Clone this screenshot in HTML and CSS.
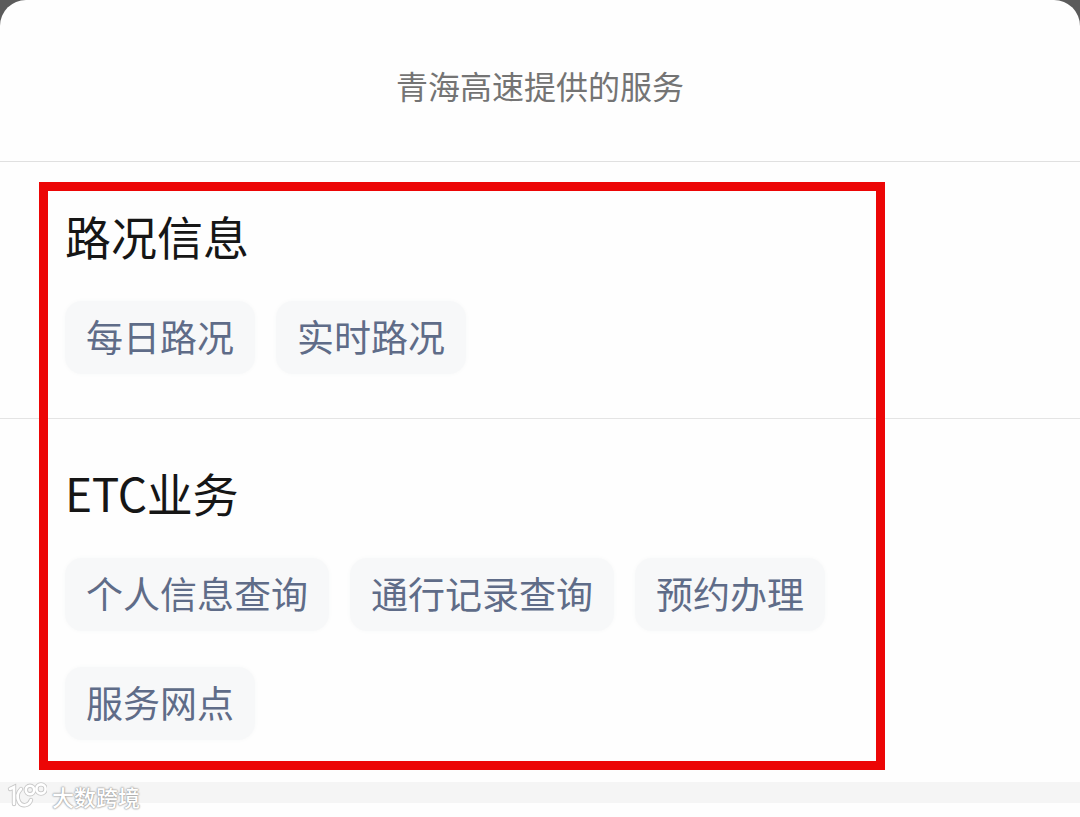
FILE: index.html
```html
<!DOCTYPE html>
<html lang="zh-CN">
<head>
<meta charset="utf-8">
<title>青海高速提供的服务</title>
<link rel="stylesheet" href="styles.css">
</head>
<body>

<div class="sheet">
  <div class="sheet-title">青海高速提供的服务</div>

  <div class="section section-road">
    <h2>路况信息</h2>
    <div class="tags">
      <a class="tag">每日路况</a>
      <a class="tag">实时路况</a>
    </div>
  </div>

  <div class="section section-etc">
    <h2>ETC业务</h2>
    <div class="tags">
      <a class="tag">个人信息查询</a>
      <a class="tag">通行记录查询</a>
      <a class="tag">预约办理</a>
      <a class="tag">服务网点</a>
    </div>
  </div>

  <div class="divider"></div>
</div>

<div class="highlight"></div>

<div class="watermark">
  <svg class="watermark-logo" width="40" height="30" viewBox="0 0 40 30">
    <g class="logo-shade">
      <path d="M3 8 L7 6 V23"/>
      <path d="M14 8 C10 12 10 17 12 21 C15 26 22 25 24 19"/>
      <circle cx="23" cy="9" r="4.2"/>
      <circle cx="34" cy="8" r="4.6"/>
    </g>
    <g class="logo-line">
      <path d="M3 8 L7 6 V23"/>
      <path d="M14 8 C10 12 10 17 12 21 C15 26 22 25 24 19"/>
      <circle cx="23" cy="9" r="4.2"/>
      <circle cx="34" cy="8" r="4.6"/>
    </g>
  </svg>
  <span>大数跨境</span>
</div>

</body>
</html>
```

FILE: styles.css
```css
body {
  margin: 0;
  height: 817px;
  overflow: hidden;
  background-color: #5b5b5b;
  font-family: "Noto Sans CJK SC", sans-serif;
}

.sheet {
  height: 817px;
  background-color: #fefefe;
  border-radius: 26px 26px 0 0;
}

.sheet-title {
  box-sizing: border-box;
  height: 162px;
  padding-top: 61px;
  border-bottom: 1px solid #e0e0e0;
  font-size: 32px;
  line-height: 48px;
  text-align: center;
  color: #747474;
}

.section {
  box-sizing: border-box;
  padding: 43px 66px 0 65px;
}

.section-road {
  height: 257px;
  border-bottom: 1px solid #e4e4e4;
}

.section-etc {
  height: 363px;
}

h2 {
  margin: 0 0 36px;
  font-size: 46px;
  font-weight: 400;
  line-height: 60px;
  color: #161616;
}

.section-etc h2 {
  letter-spacing: -0.3px;
}

.tags {
  display: flex;
  flex-wrap: wrap;
  gap: 36px 21px;
}

.tag {
  box-sizing: border-box;
  height: 73px;
  padding: 0 21px;
  border-radius: 17px;
  background-color: #f7f8f9;
  box-shadow: 0 0 5px #f8f9f9;
  font-size: 37px;
  line-height: 71px;
  color: #5f6c88;
}

.divider {
  height: 21px;
  background-color: #f5f5f5;
}

/* red frame around both groups */
.highlight {
  position: absolute;
  left: 39px;
  top: 182px;
  box-sizing: border-box;
  width: 846px;
  height: 588px;
  border: 9px solid #ec0606;
}

.watermark {
  position: absolute;
  left: 7px;
  top: 779px;
  display: flex;
  align-items: center;
  gap: 5px;
  font-size: 22px;
  font-weight: 500;
  line-height: 34px;
  color: #fff;
  text-shadow: 0 0 2px #999, 0 0 2px #aaa, 0 0 1px #aaa;
}

.watermark-logo {
  fill: none;
  stroke-linecap: round;
}

.logo-shade {
  stroke: #c8c8c8;
  stroke-width: 4.4;
}

.logo-line {
  stroke: #fff;
  stroke-width: 2.6;
}
```
